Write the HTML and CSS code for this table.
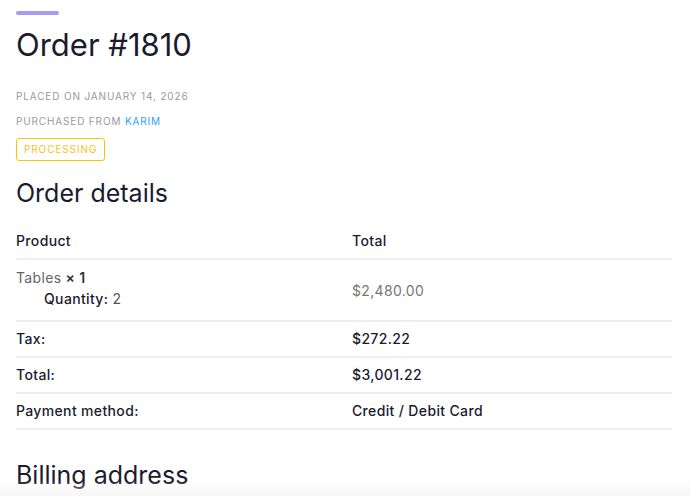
FILE: index.html
```html
<!DOCTYPE html>
<html>
<head>
<meta charset="utf-8">
<link rel="stylesheet" href="styles.css">
</head>
<body>
<main class="page">
  <div class="accent"></div>
  <h1 class="title">Order #1810</h1>
  <p class="meta meta-first">Placed on January 14, 2026</p>
  <p class="meta">Purchased from <a class="vendor" href="#">Karim</a></p>
  <span class="badge">Processing</span>
  <h2 class="section">Order details</h2>
  <div class="table">
    <div class="row head">
      <div class="cell">Product</div>
      <div class="cell">Total</div>
    </div>
    <div class="row item">
      <div class="cell">
        <div><span class="pname">Tables</span> <strong class="qty">× 1</strong></div>
        <div class="variant"><span class="vlabel">Quantity:</span> <span class="vval">2</span></div>
      </div>
      <div class="cell price">$2,480.00</div>
    </div>
    <div class="row foot">
      <div class="cell">Tax:</div>
      <div class="cell">$272.22</div>
    </div>
    <div class="row foot">
      <div class="cell">Total:</div>
      <div class="cell">$3,001.22</div>
    </div>
    <div class="row foot">
      <div class="cell">Payment method:</div>
      <div class="cell">Credit / Debit Card</div>
    </div>
  </div>
  <h2 class="section billing">Billing address</h2>
</main>
<div class="fade"></div>
</body>
</html>
```
FILE: styles.css
```css
html, body {
  margin: 0;
  padding: 0;
  background: #ffffff;
}
body {
  font-family: Inter, "Noto Sans", sans-serif;
  color: #1b1b2f;
}
.page {
  padding: 11px 18px 0 16px;
}
.accent {
  width: 43px;
  height: 4px;
  border-radius: 2px;
  background: #a99af5;
}
.title {
  margin: 11px 0 0;
  font-size: 31px;
  font-weight: 400;
  line-height: 38px;
  color: #1b1b2f;
}
.meta {
  margin: 0;
  font-size: 10px;
  line-height: 14px;
  letter-spacing: 0.85px;
  text-transform: uppercase;
  color: #9a9a9a;
}
.meta-first {
  margin-top: 25px;
}
.meta + .meta {
  margin-top: 11px;
}
.vendor {
  color: #2ea3f2;
  text-decoration: none;
}
.badge {
  display: inline-block;
  margin-top: 10px;
  padding: 4px 7px 5px;
  border: 1px solid #f7c600;
  border-radius: 3px;
  font-size: 10px;
  line-height: 12px;
  letter-spacing: 0.9px;
  text-transform: uppercase;
  color: #f5c21b;
}
.section {
  margin: 16px 0 0;
  font-size: 25px;
  font-weight: 400;
  line-height: 32px;
  color: #1b1b2f;
}
.table {
  margin-top: 14px;
}
.row {
  display: grid;
  grid-template-columns: 336px 1fr;
  border-bottom: 2px solid #eeeeee;
  font-size: 14px;
  font-weight: 500;
  letter-spacing: 0.35px;
  color: #1b1b2f;
}
.row .cell {
  padding: 8px 0 9px;
  line-height: 17px;
}
.row.head .cell {
  padding: 9px 0 9px;
}
.row.item .cell {
  padding: 9px 0 13px;
}
.row.item .cell.price {
  align-self: center;
  padding: 0;
  font-weight: 400;
  color: #777777;
}
.pname {
  font-weight: 400;
  color: #666666;
}
.qty {
  font-weight: 600;
  color: #333333;
}
.variant {
  margin-top: 4px;
  padding-left: 28px;
}
.vlabel {
  font-weight: 500;
  color: #1b1b2f;
}
.vval {
  font-weight: 400;
  color: #555555;
}
.billing {
  margin-top: 29px;
}
.fade {
  position: fixed;
  left: 0;
  right: 0;
  bottom: 0;
  height: 16px;
  background: linear-gradient(to bottom, rgba(240,240,240,0), rgba(240,240,240,0.6));
  pointer-events: none;
}
```
